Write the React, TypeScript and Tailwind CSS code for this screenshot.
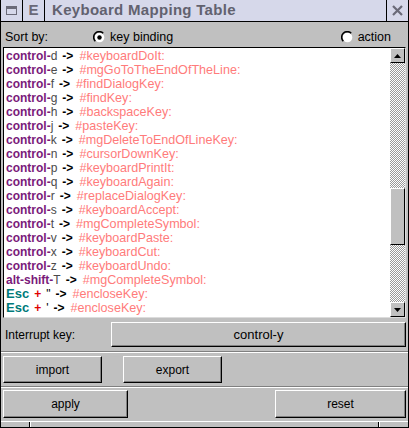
import React from "react";

type Row = { mod: string; key: string; action: string; kind?: "ctrl" | "esc" };

const rows: Row[] = [
	{ mod: "control-", key: "d", action: "#keyboardDoIt:" },
	{ mod: "control-", key: "e", action: "#mgGoToTheEndOfTheLine:" },
	{ mod: "control-", key: "f", action: "#findDialogKey:" },
	{ mod: "control-", key: "g", action: "#findKey:" },
	{ mod: "control-", key: "h", action: "#backspaceKey:" },
	{ mod: "control-", key: "j", action: "#pasteKey:" },
	{ mod: "control-", key: "k", action: "#mgDeleteToEndOfLineKey:" },
	{ mod: "control-", key: "n", action: "#cursorDownKey:" },
	{ mod: "control-", key: "p", action: "#keyboardPrintIt:" },
	{ mod: "control-", key: "q", action: "#keyboardAgain:" },
	{ mod: "control-", key: "r", action: "#replaceDialogKey:" },
	{ mod: "control-", key: "s", action: "#keyboardAccept:" },
	{ mod: "control-", key: "t", action: "#mgCompleteSymbol:" },
	{ mod: "control-", key: "v", action: "#keyboardPaste:" },
	{ mod: "control-", key: "x", action: "#keyboardCut:" },
	{ mod: "control-", key: "z", action: "#keyboardUndo:" },
	{ mod: "alt-shift-", key: "T", action: "#mgCompleteSymbol:" },
	{ mod: "Esc", key: "\"", action: "#encloseKey:", kind: "esc" },
	{ mod: "Esc", key: "'", action: "#encloseKey:", kind: "esc" },
];

const font = { fontFamily: "'Liberation Sans', Arial, sans-serif" };

const Radio = ({ on }: { on?: boolean }) => (
	<svg width="13" height="13" viewBox="0 0 13 13">
		<circle cx="6.5" cy="6.5" r="4.8" fill="#fff" />
		<path d="M2.3 10.2 A5.3 5.3 0 0 1 10.2 2.3" stroke="#000" strokeWidth="1.6" fill="none" />
		{on && <circle cx="6.5" cy="6.5" r="2.2" fill="#000" />}
	</svg>
);

const Btn = ({ label, className }: { label: string; className: string }) => (
	<div
		className={`flex items-center justify-center bg-[#c0c0c0] border border-t-white border-l-white border-b-black border-r-black shadow-[inset_-1px_-1px_0_#808080] text-black ${className}`}
	>
		{label}
	</div>
);

const Etch = () => <div className="h-[2px] border-t border-t-[#808080] border-b border-b-white" />;

export default function App() {
	return (
		<div
			className="w-[409px] h-[428px] bg-[#c0c0c0] border-x border-b border-black flex flex-col text-[12px] text-black overflow-hidden"
			style={font}
		>
			{/* title bar */}
			<div className="h-[22px] flex border-b border-black bg-[#d6d8ea] shrink-0">
				<div className="w-[22px] border-r border-black flex items-center justify-center">
					<div className="w-[11px] h-[9px] border border-[#6a6a78] border-t-[3px]" />
				</div>
				<div className="w-[22px] border-r border-black flex items-center justify-center text-[15px] font-bold text-[#6a6a78]">
					E
				</div>
				<div className="flex-1 flex items-center pl-[7px] text-[15px] font-bold text-[#62626f] tracking-[0.3px]">
					Keyboard Mapping Table
				</div>
				<div className="w-[22px] border-l border-black flex items-center justify-center">
					<svg width="11" height="11" viewBox="0 0 11 11">
						<path d="M1 1 L10 10 M10 1 L1 10" stroke="#6a6a78" strokeWidth="2.2" />
					</svg>
				</div>
			</div>

			{/* sort by */}
			<div className="h-[25px] flex items-center pt-[5px] pl-[4px] pr-[17px] shrink-0 text-[12.5px]">
				<span className="w-[88px]">Sort by:</span>
				<Radio on />
				<span className="ml-[4px] flex-1">key binding</span>
				<Radio />
				<span className="ml-[4px]">action</span>
			</div>

			{/* list */}
			<div className="mx-[2px] h-[271px] flex bg-white border border-t-black border-l-black border-b-[#dcdcdc] border-r-[#dcdcdc] shrink-0">
				<div className="flex-1 pl-[2px] pt-[1px] overflow-hidden">
					{rows.map((r, i) => (
						<div key={i} className="h-[14px] leading-[14px] whitespace-nowrap">
							{r.kind === "esc" ? (
								<>
									<span className="font-bold text-[13px] text-[#007a7a]">Esc</span>
									<span className="font-bold text-[#e00000] mx-[5px]">+</span>
									<span>{r.key}</span>
								</>
							) : (
								<>
									<span className="font-bold text-[#7a1a7a]">{r.mod}</span>
									<span className="text-[#4a4a4a]">{r.key}</span>
								</>
							)}
							<span className="font-bold ml-[5px] mr-[6px]">-&gt;</span>
							<span className="text-[12.6px] text-[#ff7b7b]">{r.action}</span>
						</div>
					))}
				</div>
				{/* scrollbar */}
				<div className="w-[15px] flex flex-col bg-[repeating-conic-gradient(#9a9a9a_0_25%,#ffffff_0_50%)] bg-[length:2px_2px]">
					<div className="h-[15px] bg-[#c0c0c0] border border-t-white border-l-white border-b-black border-r-black flex items-center justify-center">
						<svg width="7" height="4" viewBox="0 0 7 4">
							<path d="M3.5 0 L7 4 L0 4 Z" fill="#000" />
						</svg>
					</div>
					<div className="h-[125px]" />
					<div className="h-[57px] bg-[#c0c0c0] border border-t-white border-l-white border-b-black border-r-black" />
					<div className="flex-1" />
					<div className="h-[15px] bg-[#c0c0c0] border border-t-white border-l-white border-b-black border-r-black flex items-center justify-center">
						<svg width="7" height="4" viewBox="0 0 7 4">
							<path d="M0 0 L7 0 L3.5 4 Z" fill="#000" />
						</svg>
					</div>
				</div>
			</div>

			{/* interrupt key */}
			<div className="h-[33px] flex items-center pl-[4px] pr-[2px] shrink-0">
				<span className="w-[106px]">Interrupt key:</span>
				<Btn label="control-y" className="flex-1 h-[25px] text-[13px]" />
			</div>
			<Etch />

			{/* import / export */}
			<div className="h-[33px] flex items-center pl-[2px] gap-[21px] shrink-0">
				<Btn label="import" className="w-[99px] h-[27px]" />
				<Btn label="export" className="w-[99px] h-[27px]" />
			</div>
			<Etch />

			{/* apply / reset */}
			<div className="h-[33px] flex items-center justify-between px-[2px] pb-[2px] shrink-0">
				<Btn label="apply" className="w-[125px] h-[28px]" />
				<Btn label="reset" className="w-[131px] h-[28px]" />
			</div>

			{/* status strip */}
			<div className="flex-1 flex border-t border-t-white">
				<div className="w-[29px] border-r border-r-black" />
				<div className="flex-1 border-r border-r-black border-l border-l-white" />
				<div className="w-[29px] border-l border-l-white" />
			</div>
		</div>
	);
}
